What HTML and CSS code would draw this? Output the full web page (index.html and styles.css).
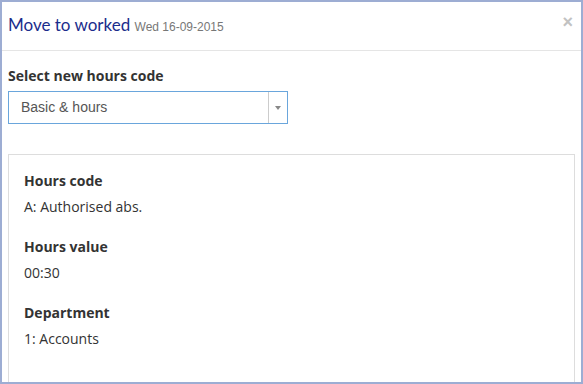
FILE: index.html
```html
<!DOCTYPE html>
<html>
<head>
<meta charset="utf-8">
<link rel="stylesheet" href="styles.css">
</head>
<body>
<div class="frame">
  <div class="header">
    <h1 class="title">Move to worked <small class="date">Wed 16-09-2015</small></h1>
    <span class="close">×</span>
  </div>
  <div class="content">
    <label class="label">Select new hours code</label>
    <div class="select">
      <span class="select-text">Basic &amp; hours</span>
      <span class="select-arrow"><span class="tri"></span></span>
    </div>
    <div class="panel">
      <div class="field">
        <div class="field-label">Hours code</div>
        <div class="field-value">A: Authorised abs.</div>
      </div>
      <div class="field">
        <div class="field-label">Hours value</div>
        <div class="field-value">00:30</div>
      </div>
      <div class="field">
        <div class="field-label">Department</div>
        <div class="field-value">1: Accounts</div>
      </div>
    </div>
  </div>
</div>
</body>
</html>
```
FILE: styles.css
```css
html, body { margin: 0; padding: 0; }
body { width: 583px; height: 384px; overflow: hidden; background: #fff; }
.frame {
  box-sizing: border-box;
  width: 583px; height: 384px;
  border: 2px solid #9dadd3;
  overflow: hidden;
  font-family: "Open Sans", sans-serif;
  color: #333;
}
.header {
  height: 48px;
  border-bottom: 1px solid #e5e5e5;
  display: flex; align-items: center; justify-content: space-between;
  padding: 0 8px 0 6px;
}
.title {
  margin: 0; font-weight: normal; font-size: 17px; color: #1b2d8c;
  font-family: "Lato", sans-serif;
  margin-top: -4px;
}
.date { font-size: 12px; color: #777; font-family: "Liberation Sans", sans-serif; }
.close { color: #c2c2c2; font-size: 18px; font-weight: bold; font-family: "Liberation Sans", sans-serif; margin-top: -8px; }
.content { padding: 16px 6px 0 6px; }
.label { display: block; font-weight: bold; font-size: 14px; line-height: 18px; margin-bottom: 6px; }
.select {
  width: 280px; height: 33px; box-sizing: border-box;
  border: 1px solid #6aa6dc;
  display: flex; align-items: stretch;
}
.select-text { flex: 1; padding-left: 12px; font-family: "Liberation Sans", sans-serif; font-size: 14px; color: #555; line-height: 31px; }
.select-arrow { width: 18px; border-left: 1px solid #ccc; display: flex; align-items: center; justify-content: center; }
.tri { width: 0; height: 0; border-left: 3px solid transparent; border-right: 3px solid transparent; border-top: 4px solid #888; }
.panel {
  margin-top: 30px;
  border: 1px solid #ddd;
  height: 240px;
  padding: 17px 15px 0 15px;
}
.field { margin-bottom: 22px; }
.field-label { font-weight: bold; font-size: 14px; line-height: 18px; margin-bottom: 8px; }
.field-value { font-size: 14px; line-height: 18px; }
```
